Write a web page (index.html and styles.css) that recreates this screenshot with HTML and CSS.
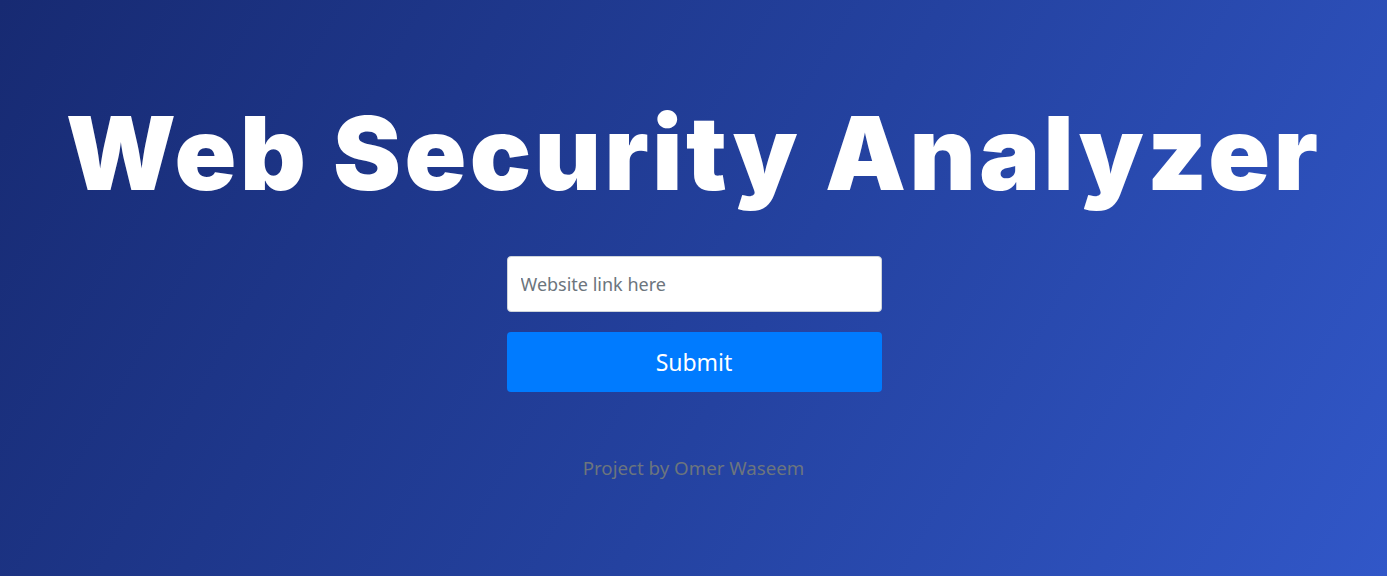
FILE: index.html
```html
<!DOCTYPE html>
<html lang="en">
<head>
<meta charset="utf-8">
<title>Web Security Analyzer</title>
<link rel="stylesheet" href="styles.css">
</head>
<body>
<main class="page">
  <h1 class="title">Web Security Analyzer</h1>
  <form class="form">
    <input class="url-input" type="text" placeholder="Website link here">
    <button class="submit" type="button">Submit</button>
  </form>
  <p class="credit">Project by Omer Waseem</p>
</main>
</body>
</html>
```
FILE: styles.css
```css
html, body {
  margin: 0;
  padding: 0;
  height: 100%;
}
body {
  background: linear-gradient(120deg, #172a72 0%, #2442a0 55%, #3157c8 100%);
  font-family: "Noto Sans", "Open Sans", sans-serif;
  overflow: hidden;
}
.page {
  display: flex;
  flex-direction: column;
  align-items: center;
  padding-top: 91px;
}
.title {
  margin: 0;
  color: #fff;
  font-family: Inter, "Open Sans", sans-serif;
  font-weight: 900;
  font-size: 102px;
  line-height: 124px;
  letter-spacing: 3.5px;
}
.form {
  display: flex;
  flex-direction: column;
  gap: 20px;
  width: 375px;
  margin-top: 41px;
  margin-left: 1px;
}
.url-input {
  box-sizing: border-box;
  height: 56px;
  width: 100%;
  border: 1px solid #ced4da;
  border-radius: 4px;
  padding: 0 13px;
  font-family: "Noto Sans", sans-serif;
  font-size: 18px;
  color: #495057;
  background: #fff;
  outline: none;
}
.url-input::placeholder {
  color: #6c757d;
}
.submit {
  height: 60px;
  width: 100%;
  border: none;
  border-radius: 4px;
  background: #007bff;
  color: #fff;
  font-family: "Noto Sans", sans-serif;
  font-size: 23px;
}
.credit {
  margin: 63px 0 0;
  color: #6c757d;
  font-size: 18.7px;
}
```
